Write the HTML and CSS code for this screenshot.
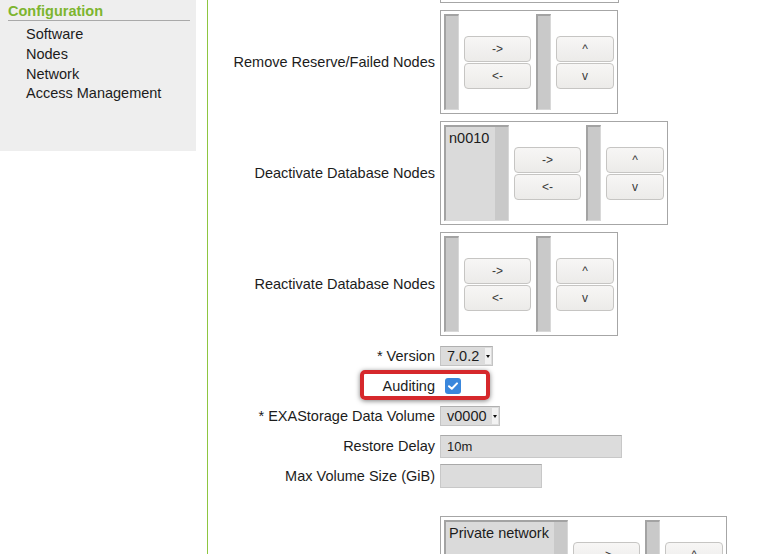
FILE: index.html
```html
<!DOCTYPE html>
<html>
<head>
<meta charset="utf-8">
<link rel="stylesheet" href="styles.css">
</head>
<body>
<div class="page">
  <aside class="sidebar">
    <h2 class="side-title">Configuration</h2>
    <ul class="side-list">
      <li>Software</li>
      <li>Nodes</li>
      <li>Network</li>
      <li>Access Management</li>
    </ul>
  </aside>
  <main class="main">
    <div class="form">
      <div class="row box-row">
        <div class="label"></div>
        <div class="picker partial"></div>
      </div>
      <div class="row box-row">
        <div class="label">Remove Reserve/Failed Nodes</div>
        <div class="picker">
          <div class="listbox empty"><div class="items"></div><div class="sbar"></div></div>
          <div class="btns"><button class="btn w67">-&gt;</button><button class="btn w67">&lt;-</button></div>
          <div class="listbox empty"><div class="items"></div><div class="sbar"></div></div>
          <div class="btns"><button class="btn w58">^</button><button class="btn w58">v</button></div>
        </div>
      </div>
      <div class="row box-row">
        <div class="label">Deactivate Database Nodes</div>
        <div class="picker">
          <div class="listbox w64"><div class="items"><span class="opt">n0010</span></div><div class="sbar"></div></div>
          <div class="btns"><button class="btn w66">-&gt;</button><button class="btn w66">&lt;-</button></div>
          <div class="listbox empty"><div class="items"></div><div class="sbar"></div></div>
          <div class="btns"><button class="btn w58">^</button><button class="btn w58">v</button></div>
        </div>
      </div>
      <div class="row box-row last-box">
        <div class="label">Reactivate Database Nodes</div>
        <div class="picker">
          <div class="listbox empty"><div class="items"></div><div class="sbar"></div></div>
          <div class="btns"><button class="btn w67">-&gt;</button><button class="btn w67">&lt;-</button></div>
          <div class="listbox empty"><div class="items"></div><div class="sbar"></div></div>
          <div class="btns"><button class="btn w58">^</button><button class="btn w58">v</button></div>
        </div>
      </div>
      <div class="row field-row">
        <div class="label">* Version</div>
        <div class="value"><div class="select s-version"><span class="sel-text">7.0.2</span><span class="arrow"></span></div></div>
      </div>
      <div class="row field-row highlight-row">
        <div class="label">Auditing</div>
        <div class="value"><span class="checkbox"><svg width="10" height="8" viewBox="0 0 10 8"><path d="M1 4.2 L3.8 6.8 L9 1.4" fill="none" stroke="#fff" stroke-width="2" stroke-linecap="round" stroke-linejoin="round"/></svg></span></div>
        <div class="highlight"></div>
      </div>
      <div class="row field-row">
        <div class="label">* EXAStorage Data Volume</div>
        <div class="value"><div class="select s-volume"><span class="sel-text">v0000</span><span class="arrow"></span></div></div>
      </div>
      <div class="row field-row">
        <div class="label">Restore Delay</div>
        <div class="value"><div class="input i-delay">10m</div></div>
      </div>
      <div class="row field-row">
        <div class="label">Max Volume Size (GiB)</div>
        <div class="value"><div class="input i-max"></div></div>
      </div>
      <div class="row box-row net-row">
        <div class="label"></div>
        <div class="picker">
          <div class="listbox w123"><div class="items"><span class="opt">Private network</span></div><div class="sbar"></div></div>
          <div class="btns"><button class="btn w66">-&gt;</button><button class="btn w66">&lt;-</button></div>
          <div class="listbox empty"><div class="items"></div><div class="sbar"></div></div>
          <div class="btns"><button class="btn w58">^</button><button class="btn w58">v</button></div>
        </div>
      </div>
    </div>
  </main>
</div>
</body>
</html>
```
FILE: styles.css
```css
html, body {
  margin: 0;
  padding: 0;
  overflow: hidden;
  background: #fff;
}
body {
  font-family: "Liberation Sans", Arial, sans-serif;
  font-size: 14.5px;
  color: #1c1c1c;
}
.page {
  display: flex;
  align-items: flex-start;
  height: 554px;
}
.sidebar {
  width: 196px;
  height: 151px;
  box-sizing: border-box;
  background: #eeeeee;
  padding: 3px 6px 0 8px;
  flex-shrink: 0;
}
.side-title {
  margin: 0;
  font-size: 14.5px;
  font-weight: bold;
  color: #7db52f;
  line-height: 16px;
  padding-bottom: 1px;
  border-bottom: 1px solid #a9a9a9;
}
.side-list {
  list-style: none;
  margin: 3px 0 0;
  padding: 0 0 0 18px;
}
.side-list li {
  line-height: 20px;
  height: 19.8px;
}
.main {
  margin-left: 11px;
  border-left: 1px solid #8ec641;
  height: 554px;
  flex: 1;
}
.form {
  display: flex;
  flex-direction: column;
  margin-top: -101px;
}
.row {
  display: grid;
  grid-template-columns: 227px auto;
  column-gap: 5px;
  align-items: center;
  justify-items: start;
}
.label {
  justify-self: end;
  white-space: nowrap;
}
.box-row {
  margin-bottom: 7px;
}
.last-box {
  margin-bottom: 5px;
}
.field-row {
  height: 30px;
}
.net-row {
  margin-top: 25px;
}
.picker {
  display: flex;
  align-items: center;
  gap: 5px;
  border: 1px solid #a6a6a6;
  padding: 3px;
  background: #fff;
}
.picker.partial {
  width: 171px;
  height: 96px;
}
.listbox {
  display: flex;
  height: 96px;
  box-sizing: border-box;
  border-left: 2px solid #a3a3a3;
  border-top: 2px solid #a3a3a3;
  border-right: 1px solid #d8d8d8;
  border-bottom: 1px solid #d8d8d8;
}
.listbox.empty { width: 15px; }
.listbox.w64 { width: 65px; }
.listbox.w123 { width: 124px; }
.items {
  flex: 1;
  background: #dadada;
  padding: 2px 0 0 3px;
  white-space: nowrap;
  overflow: hidden;
}
.listbox.empty .items { padding: 0; flex: 0 0 0; }
.sbar {
  width: 13px;
  background: #c9c9c9;
}
.listbox.empty .sbar { flex: 1; }
.opt {
  line-height: 18px;
  color: #1c1c1c;
}
.btns {
  display: flex;
  flex-direction: column;
  gap: 1px;
}
.btn {
  height: 26px;
  box-sizing: border-box;
  border: 1px solid #c6c5c3;
  border-radius: 4px;
  background: linear-gradient(#f7f6f5, #ecebe9);
  font-family: "Liberation Sans", Arial, sans-serif;
  font-size: 12px;
  color: #3a3a3a;
  padding: 0;
}
.btn.w67 { width: 67px; }
.btn.w66 { width: 67px; }
.btn.w58 { width: 58px; }
.value {
  display: flex;
  align-items: center;
}
.select {
  display: flex;
  align-items: center;
  height: 20px;
  box-sizing: border-box;
  background: #dcdcdc;
  border: 1px solid #c4c4c4;
  border-top-color: #b0b0b0;
  padding-left: 6px;
}
.s-version { width: 53px; }
.s-volume { width: 60px; }
.sel-text {
  flex: 1;
  line-height: 18px;
}
.arrow {
  width: 6px;
  height: 16px;
  margin-right: 1px;
  background: #f2f2f2;
  position: relative;
}
.arrow::after {
  content: "";
  position: absolute;
  left: 1px;
  top: 7px;
  border-left: 2px solid transparent;
  border-right: 2px solid transparent;
  border-top: 3px solid #111;
}
.input {
  box-sizing: border-box;
  background: #dcdcdc;
  border: 1px solid #c8c8c8;
  border-top-color: #a9a9a9;
  font-size: 13px;
  padding-left: 6px;
  display: flex;
  align-items: center;
}
.i-delay { width: 182px; height: 23px; }
.i-max { width: 102px; height: 24px; }
.checkbox {
  width: 16px;
  height: 16px;
  margin-left: 5px;
  border-radius: 3px;
  background: #3a87dc;
  display: flex;
  align-items: center;
  justify-content: center;
}
.highlight-row {
  position: relative;
}
.highlight {
  position: absolute;
  left: 152px;
  top: -1px;
  width: 130px;
  height: 30px;
  box-sizing: border-box;
  border: 4px solid #d6282c;
  border-radius: 5px;
  box-shadow: 0 1px 5px rgba(0, 0, 0, 0.5);
}
```
